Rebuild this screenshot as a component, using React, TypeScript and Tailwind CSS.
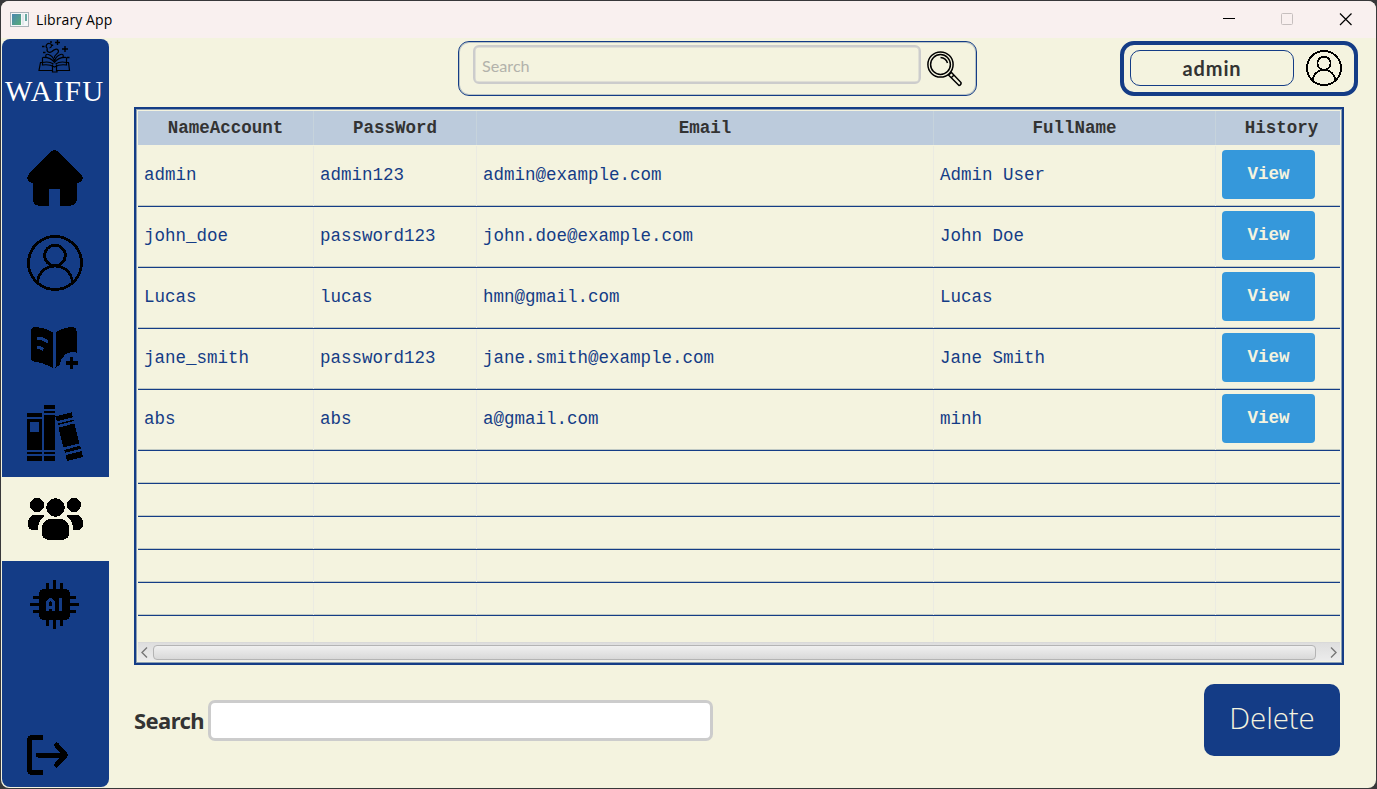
import React from "react";

const accounts = [
  { name: "admin", pass: "admin123", email: "admin@example.com", full: "Admin User" },
  { name: "john_doe", pass: "password123", email: "john.doe@example.com", full: "John Doe" },
  { name: "Lucas", pass: "lucas", email: "hmn@gmail.com", full: "Lucas" },
  { name: "jane_smith", pass: "password123", email: "jane.smith@example.com", full: "Jane Smith" },
  { name: "abs", pass: "abs", email: "a@gmail.com", full: "minh" },
];

const cols = "grid grid-cols-[176px_163px_457px_282px_124px]";

function LogoIcon() {
  return (
    <svg width="34" height="34" viewBox="0 0 34 34" fill="none" stroke="#000" strokeWidth="1.2" className="block">
      <path d="M4 22.500H2.500L1 30.500H14.500V32H19V30.500H31.500L30.500 22.500H29M14.500 24.500V31M18.500 24.500V31" />
      <path d="M4.500 17.500V25Q11.500 24 16.500 27 21.500 24 28.500 25V17.500M4.500 22.500Q11 21 15.500 24M28.500 22.500Q22 21 17.500 24" />
      <path d="M4.500 17.500Q12.500 17 16.500 22.500 20.500 17 28.500 17.500M8 17Q7 13.500 10.500 14.500 15 16 16.500 21M25 17Q26 13.500 22.500 14.500 18 16 16.500 21" />
      <path d="M16.500 18C15.500 14.500 21 14 20.500 11 19.500 7.500 15.500 10 14 11.500 10.500 13.500 8 11 9.500 8.500M9.500 8.500C6.500 6.500 9 3 11.500 3.500 14.500 4 14 7.500 11.500 8" />
      <path d="M19.500 0V5M17 2.500H22M27 6V12M24 9H30M14.500 4.500V6M4 6.500H6.500M5 12.500H7.500M29 17.500H31.500M12 2H14" strokeWidth="1.4" />
    </svg>
  );
}

function HomeIcon() {
  return (
    <svg width="56" height="56" viewBox="0 0 56 56" shapeRendering="crispEdges" className="block">
      <path d="M24 1.500Q27.500-1.200 31 1.500L54 24Q56 26 55.500 29 54.500 32.500 50 33V50Q49 55 44 55.500H33V38.500H22V55.500H11Q6.500 55 6 50V33Q1.500 32.500.5 29 0 26 2 24Z" />
    </svg>
  );
}

function UserIcon({ size, stroke }: { size: number; stroke: number }) {
  return (
    <svg width={size} height={size} viewBox="0 0 56 56" fill="none" stroke="#000" strokeWidth={stroke} shapeRendering="crispEdges" className="block">
      <circle cx="28" cy="28" r="26.500" />
      <circle cx="28" cy="20.500" r="10.300" />
      <path d="M10.500 47.500C11.500 37 19 31 28 31s16.500 6 17.500 16.500" />
    </svg>
  );
}

function BookPlusIcon() {
  return (
    <svg width="48" height="42" viewBox="0 0 48 42" shapeRendering="crispEdges" className="block">
      <path d="M4 0Q0 .3 0 4V31Q0 34 3.500 34.500 13 36 21.500 40.500V5Q13 .5 4 0Z" />
      <path d="M24.500 5Q33 .5 41 0 45.500.3 45.500 4V25.500Q35 24 31.500 31 29 33 29.500 37.500L24.500 40.500Z" />
      <path d="M5.500 11.500H10L17 14.500M5.500 20.500H9L12.500 22.500" fill="none" stroke="#143c86" strokeWidth="3.200" />
      <path d="M40.500 30V42M34.500 36H46.500" stroke="#000" strokeWidth="3.500" />
    </svg>
  );
}

function BooksIcon() {
  return (
    <svg width="56" height="56" viewBox="0 0 56 56" shapeRendering="crispEdges" className="block">
      <path fillRule="evenodd" d="M0 8H15V12H0ZM0 14H15V45H0ZM3 17V27H12V17ZM0 47H15V49H0ZM0 51H15V56H0ZM16.500 0H28V4H16.500ZM16.500 6H28V8H16.500ZM16.500 10H28V45H16.500ZM16.500 47H28V49H16.500ZM16.500 51H28V56H16.500Z" />
      <g transform="translate(28.500 11.500) rotate(-14.500)">
        <path d="M0 0H16.500V5H0ZM0 7.500H16.500V9H0ZM0 11.500H16.500V32H0ZM0 34.500H16.500V37.500H0ZM0 40H16.500V46H0Z" />
      </g>
    </svg>
  );
}

function UsersIcon() {
  return (
    <svg width="56" height="42" viewBox="0 0 56 42" shapeRendering="crispEdges" className="block">
      <circle cx="9" cy="7" r="7" />
      <circle cx="46" cy="7" r="7" />
      <circle cx="27.500" cy="9.500" r="9.300" />
      <path d="M22 21H33Q41 22 41 31V36Q40.500 40.500 36 41.500H19Q14.500 40.500 14 36V31Q14 22 22 21Z" />
      <path d="M7 16.500H14L17 18Q10.500 21.500 9.500 32H5Q.500 31.500 0 27V24Q.500 18 7 16.500Z" />
      <path d="M48 16.500H41L38 18Q44.500 21.500 45.500 32H50Q54.500 31.500 55 27V24Q54.500 18 48 16.500Z" />
    </svg>
  );
}

function ChipIcon() {
  return (
    <svg width="49" height="49" viewBox="0 0 49 49" shapeRendering="crispEdges" className="block">
      <rect x="9" y="9" width="31" height="31" rx="5" />
      <path d="M24.500 0V49M0 24.500H49M17.500 3V46M31.500 3V46M3 17.500H46M3 31.500H46" stroke="#000" strokeWidth="3" />
      <path d="M17.500 31V22L20 19.500H21L23.500 22V31M17.500 27H23.500M30.500 18V31" fill="none" stroke="#143c86" strokeWidth="3" />
    </svg>
  );
}

function LogoutIcon() {
  return (
    <svg width="41" height="40" viewBox="0 0 41 40" fill="none" stroke="#000" strokeWidth="5" strokeLinecap="round" strokeLinejoin="round" shapeRendering="crispEdges" className="block">
      <path d="M14 2.500H6Q2.500 2.500 2.500 6V34Q2.500 37.500 6 37.500H14M11 20H37M29.500 10L38 19V21L29.500 30" />
    </svg>
  );
}

function MagnifierIcon() {
  return (
    <svg width="36" height="36" viewBox="0 0 36 36" fill="none" stroke="#000" strokeWidth="1.500" className="block">
      <circle cx="13.500" cy="13.500" r="12.600" />
      <circle cx="13.500" cy="13.500" r="9.900" />
      <path d="M13.500 6.500Q19 7 20.500 12M21 24.500L24.500 21.500 34 31.500Q34.500 34 32 34.500L22 24.500M24 27L27 24" />
    </svg>
  );
}

function NavItem({ active, children }: { active?: boolean; children: React.ReactNode }) {
  return (
    <button className={active ? "flex h-[84px] items-center justify-center bg-[#f4f3df]" : "flex h-[85px] items-center justify-center pr-[2px] pb-[3px]"}>
      {children}
    </button>
  );
}

function Sidebar() {
  return (
    <nav className="flex h-[748px] w-[107px] shrink-0 flex-col overflow-hidden rounded-[8px] bg-[#143c86]">
      <div className="flex h-[98px] flex-col items-center pr-px pt-px">
        <LogoIcon />
        <span className="w-[103px] whitespace-nowrap text-center font-['Liberation_Serif',serif] text-[29px] leading-[34px] tracking-[1.6px] text-white">WAIFU</span>
      </div>
      <NavItem><HomeIcon /></NavItem>
      <NavItem><UserIcon size={56} stroke={2.8} /></NavItem>
      <NavItem><BookPlusIcon /></NavItem>
      <NavItem><BooksIcon /></NavItem>
      <NavItem active><UsersIcon /></NavItem>
      <button className="flex h-[86px] items-center justify-center pr-[2px]"><ChipIcon /></button>
      <button className="mt-auto flex h-[64px] items-center pl-[25px]"><LogoutIcon /></button>
    </nav>
  );
}

function TitleBar() {
  return (
    <header className="flex h-[37px] shrink-0 items-center bg-[#f9f0ef] pl-[9px] text-black">
      <svg width="19" height="16" viewBox="0 0 19 16" className="block">
        <defs>
          <linearGradient id="app" x1="0" y1="0" x2="1" y2="1">
            <stop offset="0" stopColor="#4a86b0" />
            <stop offset="1" stopColor="#58ad78" />
          </linearGradient>
        </defs>
        <rect x=".5" y=".5" width="18" height="14" fill="#f5f7f8" stroke="#a9b2b8" />
        <rect x="2" y="2" width="9" height="11" fill="url(#app)" />
        <rect x="12" y="2" width="2" height="11" fill="#e1e8ec" />
        <rect x="15" y="2" width="2" height="7" fill="#68a9a2" />
      </svg>
      <span className="ml-[7px] font-['Open_Sans',sans-serif] text-[14px] tracking-[0.1px]">Library App</span>
      <svg width="130" height="13" viewBox="0 0 130 13" fill="none" className="ml-auto mr-[24px] block">
        <path d="M1 5.500H13" stroke="#000" />
        <rect x="59.500" y=".5" width="11" height="11" rx="1" stroke="#c6bfbe" />
        <path d="M118 .5L129.500 12M129.500 .5L118 12" stroke="#000" strokeWidth="1.200" />
      </svg>
    </header>
  );
}

function AccountTable() {
  return (
    <section className="mt-[11px] ml-[25px] flex h-[558px] w-[1210px] flex-col border-2 border-[#143c86] pt-[2px] pl-[2px] shadow-[inset_0_0_0_1px_#8c9fb4]">
      <div className={cols + " h-[34px] w-[1202px] shrink-0 bg-[#bccbdc] text-center font-['Liberation_Mono',monospace] text-[17.5px] font-bold leading-[34px] text-[#333333]"}>
        <span className="border-r border-[#c6d3dc]">NameAccount</span>
        <span className="border-r border-[#c6d3dc]">PassWord</span>
        <span className="border-r border-[#c6d3dc]">Email</span>
        <span className="border-r border-[#c6d3dc]">FullName</span>
        <span className="pl-[7px]">History</span>
      </div>
      {accounts.map((a, i) => (
        <div key={a.name} className={(i === 0 ? "h-[62px] pt-px " : "h-[61px] ") + cols + " w-[1202px] shrink-0 border-b border-[#143c86] font-['Liberation_Mono',monospace] text-[17.5px] leading-[58px] text-[#143c86] shadow-[inset_0_-1px_0_#c0c9c4]"}>
          <span className="border-r border-[#ebebe2] pl-[6px]">{a.name}</span>
          <span className="border-r border-[#ebebe2] pl-[6px]">{a.pass}</span>
          <span className="border-r border-[#ebebe2] pl-[6px]">{a.email}</span>
          <span className="border-r border-[#ebebe2] pl-[6px]">{a.full}</span>
          <div className="pt-[4px] pl-[6px]">
            <button className="block h-[49px] w-[93px] rounded-[4px] bg-[#3598db] text-[17.5px] font-bold leading-[49px] text-[#f4f3df]">View</button>
          </div>
        </div>
      ))}
      {[0, 1, 2, 3, 4, 5].map((i) => (
        <div key={i} className={i < 5 ? cols + " h-[33px] w-[1202px] shrink-0 border-b border-[#143c86] shadow-[inset_0_-1px_0_#c0c9c4]" : cols + " h-[26px] w-[1202px] shrink-0"}>
          <span className="border-r border-[#ebebe2]" />
          <span className="border-r border-[#ebebe2]" />
          <span className="border-r border-[#ebebe2]" />
          <span className="border-r border-[#ebebe2]" />
        </div>
      ))}
      <div className="flex h-[19px] w-[1202px] shrink-0 items-center border-t border-[#d9d9d9] bg-gradient-to-b from-[#dedede] to-[#ececec] px-[3px]">
        <svg width="7" height="11" viewBox="0 0 7 11" fill="none" stroke="#777" strokeWidth="1.400"><path d="M6 .5L1 5.500 6 10.500" /></svg>
        <div className="ml-[5px] h-[15px] w-[1163px] rounded-[4px] border border-[#b4b4b4] bg-gradient-to-b from-[#f0f0f0] to-[#d9d9d9]" />
        <svg width="7" height="11" viewBox="0 0 7 11" fill="none" stroke="#777" strokeWidth="1.400" className="ml-auto"><path d="M1 .5L6 5.500 1 10.500" /></svg>
      </div>
    </section>
  );
}

export default function App() {
  return (
    <div className="h-[789px] w-[1377px] bg-[#38383a] p-px">
      <div className="flex h-[787px] w-[1375px] flex-col overflow-hidden rounded-[8px] bg-[#f4f3df]">
        <TitleBar />
        <div className="flex pt-px pl-px">
          <Sidebar />
          <main className="flex w-[1267px] flex-col">
            <div className="flex pt-[2px]">
              <div className="ml-[349px] flex h-[55px] w-[519px] rounded-[11px] border border-[#143c86] pt-[3px] pl-[14px] shadow-[inset_0_0_0_1px_#b9c3c4]">
                <div className="h-[39px] w-[448px] rounded-[6px] border-2 border-[#cccccc] pl-[7px] font-[Lato,sans-serif] text-[16.200px] leading-[37px] text-[#b2b2ab] shadow-[inset_0_0_0_0.5px_#cccccc]">Search</div>
                <div className="mt-[6px] ml-[6px]"><MagnifierIcon /></div>
              </div>
              <div className="ml-[143px] flex h-[55px] w-[238px] items-center rounded-[14px] border-4 border-[#143c86] pb-px pl-[6px]">
                <div className="h-[36px] w-[164px] rounded-[10px] border border-[#143c86] text-center font-[Lato,sans-serif] text-[20px] font-bold leading-[34px] tracking-[0.9px] text-[#333333]">admin</div>
                <div className="ml-[12px]"><UserIcon size={36} stroke={2.8} /></div>
              </div>
            </div>
            <AccountTable />
            <div className="mt-[19px] ml-[25px] flex h-[72px] w-[1206px] items-center">
              <span className="w-[74px] shrink-0 whitespace-nowrap font-['Noto_Sans',sans-serif] text-[22px] font-bold tracking-[-0.6px] text-[#333333]">Search</span>
              <div className="h-[41px] w-[505px] rounded-[7px] border-[3px] border-[#cccccc] bg-white" />
              <button className="ml-auto h-[72px] w-[136px] rounded-[10px] bg-[#143c86] pb-[3px] font-['Open_Sans',sans-serif] text-[29.500px] font-light tracking-[-0.1px] text-[#f4f3df]">Delete</button>
            </div>
          </main>
        </div>
      </div>
    </div>
  );
}
